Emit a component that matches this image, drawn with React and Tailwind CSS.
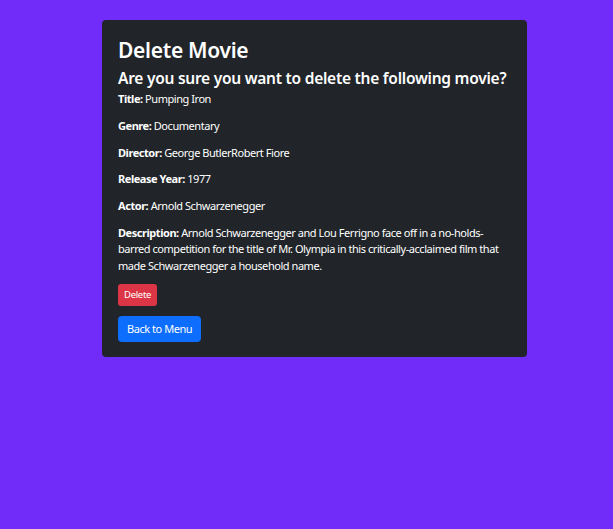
import React from "react";

const rows = [
  ["Title:", "Pumping Iron"],
  ["Genre:", "Documentary"],
  ["Director:", "George ButlerRobert Fiore"],
  ["Release Year:", "1977"],
  ["Actor:", "Arnold Schwarzenegger"],
  [
    "Description:",
    "Arnold Schwarzenegger and Lou Ferrigno face off in a no-holds-barred competition for the title of Mr. Olympia in this critically-acclaimed film that made Schwarzenegger a household name.",
  ],
];

export default function App() {
  return (
    <div
      className="min-h-[529px] bg-[#712cf9] pt-5"
      style={{ fontFamily: '"Noto Sans", "Open Sans", sans-serif' }}
    >
      <div className="ml-[102px] w-[425px] rounded bg-[#212529] px-4 pt-4 pb-[15px] text-white">
        <h2 className="mb-[4px] text-[21px] font-semibold leading-[28px] tracking-[-0.3px]">
          Delete Movie
        </h2>
        <h4 className="mb-[3px] whitespace-nowrap text-[15.5px] font-semibold leading-[20px] tracking-[-0.25px]">
          Are you sure you want to delete the following movie?
        </h4>
        <div className="flex flex-col gap-[10.3px]">
          {rows.map(([k, v]) => (
            <p key={k} className="text-[11px] leading-[16.5px] tracking-[-0.45px]">
              <strong className="font-bold">{k}</strong> {v}
            </p>
          ))}
        </div>
        <div className="mt-[9.5px] flex flex-col items-start gap-[10px]">
          <button className="h-[22px] rounded-[3px] bg-[#dc3545] px-[6px] text-[9.5px] tracking-[-0.3px] text-white">
            Delete
          </button>
          <button className="h-[26px] rounded-[4px] bg-[#0d6efd] px-[9px] text-[11px] tracking-[-0.45px] text-white">
            Back to Menu
          </button>
        </div>
      </div>
    </div>
  );
}
